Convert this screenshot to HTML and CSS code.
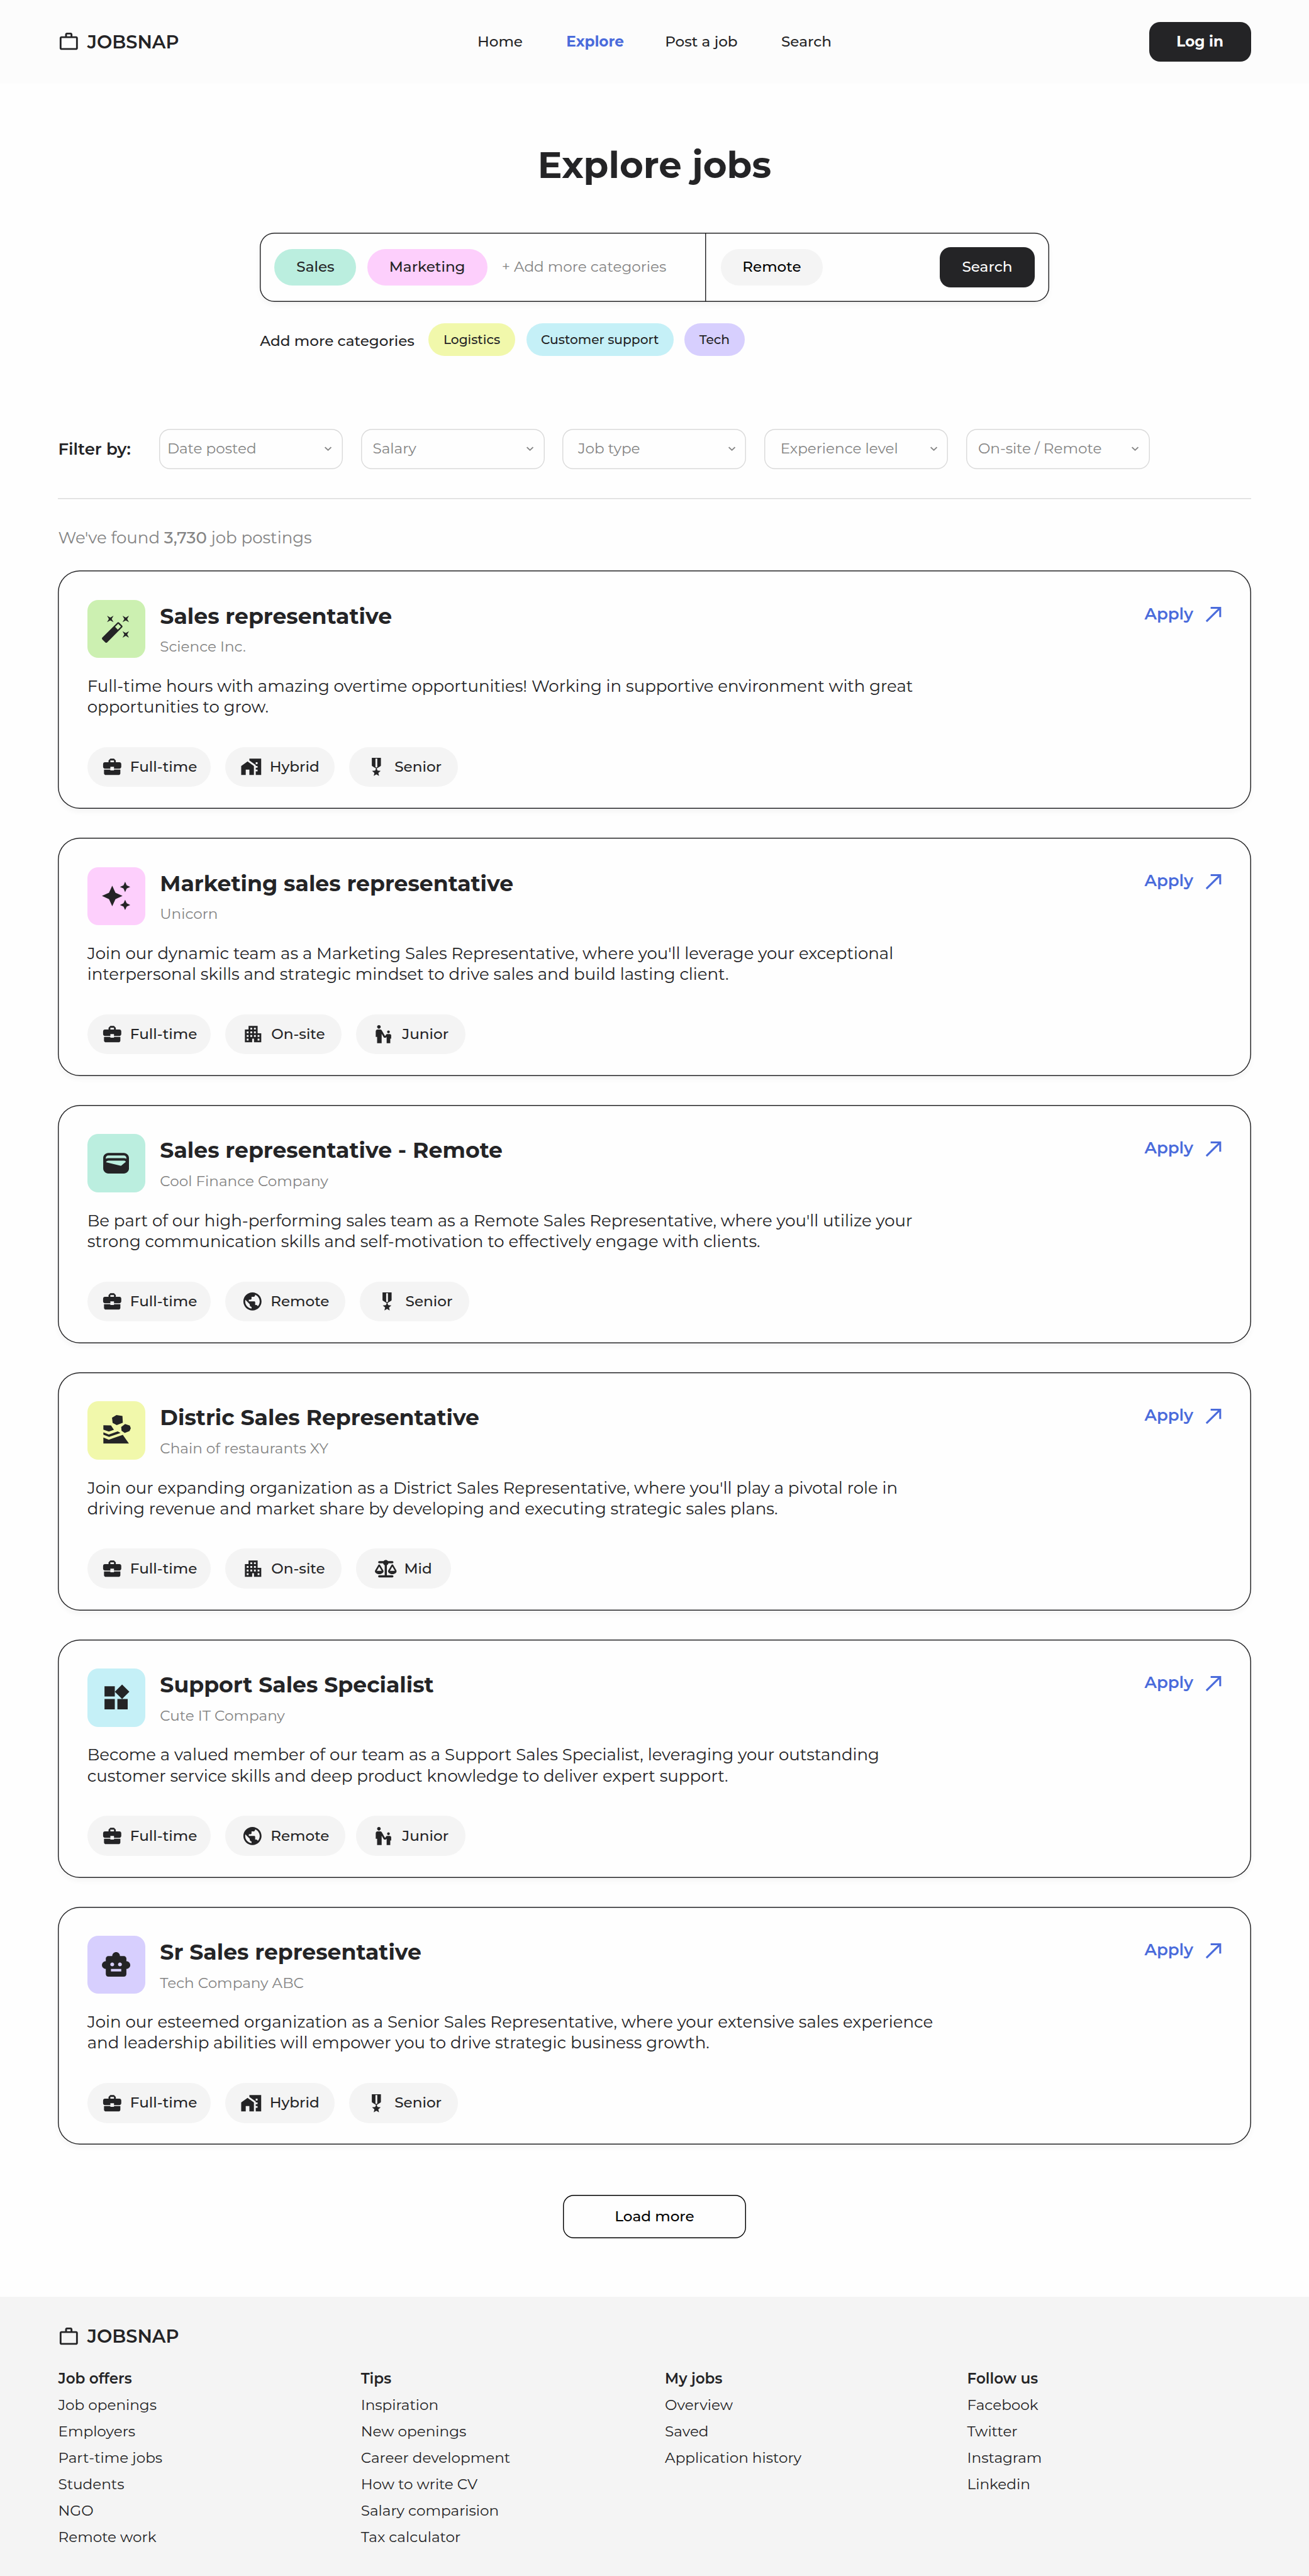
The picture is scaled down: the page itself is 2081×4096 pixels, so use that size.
FILE: index.html
```html
<!DOCTYPE html>
<html lang="en">
<head>
<meta charset="utf-8">
<title>Explore jobs - JOBSNAP</title>
<link rel="stylesheet" href="styles.css">
</head>
<body>
<svg class="sprite" aria-hidden="true">
  <symbol id="i-logo" viewBox="0 0 24 24"><path d="M14 6V4h-4v2h4zM4 8v11h16V8H4zm16-2c1.11 0 2 .89 2 2v11c0 1.11-.89 2-2 2H4c-1.11 0-2-.89-2-2l.01-11c0-1.11.88-2 1.99-2h4V4c0-1.11.89-2 2-2h4c1.11 0 2 .89 2 2v2h4z"/></symbol>
  <symbol id="i-chevron" viewBox="0 0 24 24"><path d="M6.2 10.2 7.6 8.9 12 13.1l4.4-4.2 1.4 1.3L12 15.6z"/></symbol>
  <symbol id="i-arrow" viewBox="0 0 18 18"><path d="M6 1.7h10.5v10.2M16.2 2 1.3 16.7" fill="none" stroke="currentColor" stroke-width="2.1"/></symbol>
  <symbol id="i-wand" viewBox="0 0 24 24"><path d="M7.5 5.6L10 7 8.6 4.5 10 2 7.5 3.4 5 2l1.4 2.5L5 7zm12 9.8L17 14l1.4 2.5L17 19l2.5-1.4L22 19l-1.4-2.5L22 14zM22 2l-2.5 1.4L17 2l1.4 2.5L17 7l2.5-1.4L22 7l-1.4-2.5zm-7.63 5.29c-.39-.39-1.02-.39-1.41 0L1.29 18.96c-.39.39-.39 1.02 0 1.41l2.34 2.34c.39.39 1.02.39 1.41 0L16.7 11.05c.39-.39.39-1.02 0-1.41l-2.33-2.35zm-1.03 5.49l-2.12-2.12 2.44-2.44 2.12 2.12-2.44 2.44z"/></symbol>
  <symbol id="i-sparkle" viewBox="0 0 24 24"><path d="M19 9l1.25-2.75L23 5l-2.75-1.25L19 1l-1.25 2.75L15 5l2.75 1.25L19 9zm-7.5.5L9 4 6.5 9.5 1 12l5.5 2.5L9 20l2.5-5.5L17 12l-5.5-2.5zM19 15l-1.25 2.75L15 19l2.75 1.25L19 23l1.25-2.75L23 19l-2.75-1.25L19 15z"/></symbol>
  <symbol id="i-wallet" viewBox="0 0 24 24"><path d="M18 4H6C3.79 4 2 5.79 2 8v8c0 2.21 1.79 4 4 4h12c2.21 0 4-1.79 4-4V8c0-2.21-1.79-4-4-4zm-1.86 9.77c-.24.2-.57.28-.88.2L4.15 11.25C4.45 10.52 5.16 10 6 10h12c.67 0 1.26.34 1.63.84l-3.49 2.93zM6 6h12c1.1 0 2 .9 2 2v.55c-.59-.34-1.27-.55-2-.55H6c-.73 0-1.41.21-2 .55V8c0-1.1.9-2 2-2z"/></symbol>
  <symbol id="i-rocks" viewBox="0 0 34 34"><path d="M17.4 0 24 1.1l.4 7.3-6.7 2.7-4.5-2.5-.7-5.6zM26.9 9.8l5.2 1.8 1.1 3-1.4 3.1-5.3 2.1-3.5-2.5-.4-4.1zM3 11.3l8.4.1 3.2 4.9L9 18.2l-6-2.1zM3 19.1l6 2.3 9.8-3.4 3.1 1.8L9.3 24.1 3 21.6zM3 24.8l6 2.3 15.4-5.3 6.7 9.6H3z"/></symbol>
  <symbol id="i-widgets" viewBox="0 0 24 24"><path d="M13 13v8h8v-8h-8zM3 21h8v-8H3v8zM3 3v8h8V3H3zm13.66-1.31L11 7.34 16.66 13l5.66-5.66-5.66-5.65z"/></symbol>
  <symbol id="i-robot" viewBox="0 0 24 24"><path d="M20 9V7c0-1.1-.9-2-2-2h-3c0-1.66-1.34-3-3-3S9 3.34 9 5H6c-1.1 0-2 .9-2 2v2c-1.66 0-3 1.34-3 3s1.34 3 3 3v4c0 1.1.9 2 2 2h12c1.1 0 2-.9 2-2v-4c1.66 0 3-1.34 3-3s-1.34-3-3-3zM7.5 11.5c0-.83.67-1.5 1.5-1.5s1.5.67 1.5 1.5S9.83 13 9 13s-1.5-.67-1.5-1.5zM16 17H8v-2h8v2zm-1-4c-.83 0-1.5-.67-1.5-1.5S14.17 10 15 10s1.5.67 1.5 1.5S15.83 13 15 13z"/></symbol>
  <symbol id="i-case" viewBox="0 0 24 24"><path d="M10 16v-1H3.01L3 19c0 1.11.89 2 2 2h14c1.11 0 2-.89 2-2v-4h-7v1h-4zm10-9h-4.01V5l-2-2h-4l-2 2v2H4c-1.1 0-2 .9-2 2v3c0 1.11.89 2 2 2h6v-2h4v2h6c1.1 0 2-.9 2-2V9c0-1.1-.9-2-2-2zm-6 0h-4V5h4v2z"/></symbol>
  <symbol id="i-hybrid" viewBox="0 0 24 24"><path d="M1 11v10h5v-6h4v6h5V11L8 6zM10 3v1.97l7 5V11h2v2h-2v2h2v2h-2v4h6V3H10zm9 6h-2V7h2v2z"/></symbol>
  <symbol id="i-medal" viewBox="0 0 24 24"><path d="M17 10.43V2H7v8.43c0 .35.18.68.49.86l4.18 2.51-.99 2.34-3.41.29 2.59 2.24L9.07 22 12 20.23 14.93 22l-.78-3.33 2.59-2.24-3.41-.29-.99-2.34 4.18-2.51c.3-.18.48-.5.48-.86zm-4 1.8l-1 .6-1-.6V3h2v9.23z"/></symbol>
  <symbol id="i-office" viewBox="0 0 24 24"><path d="M17 11V3H7v4H3v14h8v-4h2v4h8V11h-4zM7 19H5v-2h2v2zm0-4H5v-2h2v2zm0-4H5V9h2v2zm4 4H9v-2h2v2zm0-4H9V9h2v2zm0-4H9V5h2v2zm4 8h-2v-2h2v2zm0-4h-2V9h2v2zm0-4h-2V5h2v2zm4 12h-2v-2h2v2zm0-4h-2v-2h2v2z"/></symbol>
  <symbol id="i-junior" viewBox="0 0 24 24"><path d="M6.5 2c1.1 0 2 .9 2 2s-.9 2-2 2-2-.9-2-2 .9-2 2-2zm9 7.5c0 .83.67 1.5 1.5 1.5s1.5-.67 1.5-1.5S17.83 8 17 8s-1.5.67-1.5 1.5zm3 2.5h-2.84c-.58.01-1.14.32-1.45.86l-.92 1.32L9.72 8C9.35 7.37 8.69 7.01 8.01 7H5c-1.1 0-2 .9-2 2v6h1.5v7h5V11.61L12.03 16h2.2l.77-1.1V22h4v-5h1v-3.5c0-.82-.67-1.5-1.5-1.5z"/></symbol>
  <symbol id="i-globe" viewBox="0 0 24 24"><path d="M12 2C6.48 2 2 6.48 2 12s4.48 10 10 10 10-4.48 10-10S17.52 2 12 2zm-1 17.93c-3.95-.49-7-3.85-7-7.93 0-.62.08-1.21.21-1.79L9 15v1c0 1.1.9 2 2 2v1.93zm6.9-2.54c-.26-.81-1-1.39-1.9-1.39h-1v-3c0-.55-.45-1-1-1H8v-2h2c.55 0 1-.45 1-1V7h2c1.1 0 2-.9 2-2v-.41c2.93 1.19 5 4.06 5 7.41 0 2.08-.8 3.97-2.1 5.39z"/></symbol>
  <symbol id="i-scale" viewBox="0 0 640 512"><path d="M384 32H512c17.7 0 32 14.3 32 32s-14.3 32-32 32H398.4c-5.2 25.8-22.9 47.1-46.4 57.3V448H512c17.7 0 32 14.3 32 32s-14.3 32-32 32H320 128c-17.7 0-32-14.3-32-32s14.3-32 32-32H288V153.3c-23.5-10.3-41.2-31.6-46.4-57.3H128c-17.7 0-32-14.3-32-32s14.3-32 32-32H256c14.6-19.4 37.8-32 64-32s49.4 12.6 64 32zm55.6 288H584.4L512 195.8 439.6 320zM512 416c-62.9 0-115.2-34-126-78.9c-2.6-11 1-22.3 6.7-32.1l95.2-163.2c5-8.6 14.2-13.8 24.1-13.8s19.1 5.3 24.1 13.8l95.2 163.2c5.7 9.8 9.3 21.1 6.7 32.1C627.2 382 574.9 416 512 416zM126.8 195.8L54.4 320H199.3L126.8 195.8zM.9 337.1c-2.6-11 1-22.3 6.7-32.1l95.2-163.2c5-8.6 14.2-13.8 24.1-13.8s19.1 5.3 24.1 13.8l95.2 163.2c5.7 9.8 9.3 21.1 6.7 32.1C242 382 189.7 416 126.8 416S11.7 382 .9 337.1z"/></symbol>
</svg>

<header class="header">
  <a class="logo"><svg><use href="#i-logo"/></svg><span>JOBSNAP</span></a>
  <nav class="nav">
    <a>Home</a>
    <a class="active">Explore</a>
    <a>Post a job</a>
    <a>Search</a>
  </nav>
  <button class="btn login">Log in</button>
</header>

<main class="main">
  <h1 class="title">Explore jobs</h1>

  <section class="search">
    <div class="search-box">
      <div class="search-cats">
        <span class="chip mint sales">Sales</span>
        <span class="chip pink marketing">Marketing</span>
        <span class="placeholder">+ Add more categories</span>
      </div>
      <div class="search-place">
        <span class="chip grey remote">Remote</span>
        <button class="btn search-btn">Search</button>
      </div>
    </div>
    <div class="suggest">
      <span class="suggest-label">Add more categories</span>
      <span class="chip small lime logistics">Logistics</span>
      <span class="chip small sky support">Customer support</span>
      <span class="chip small violet tech">Tech</span>
    </div>
  </section>

  <section class="filters">
    <span class="filters-label">Filter by:</span>
    <div class="select date"><span>Date posted</span><svg><use href="#i-chevron"/></svg></div>
    <div class="select salary"><span>Salary</span><svg><use href="#i-chevron"/></svg></div>
    <div class="select type"><span>Job type</span><svg><use href="#i-chevron"/></svg></div>
    <div class="select level"><span>Experience level</span><svg><use href="#i-chevron"/></svg></div>
    <div class="select site"><span>On-site / Remote</span><svg><use href="#i-chevron"/></svg></div>
  </section>

  <p class="found">We've found <b>3,730</b> job postings</p>

  <section class="jobs">
    <article class="card">
      <div class="card-head">
        <div class="tile green"><svg><use href="#i-wand"/></svg></div>
        <div class="card-names"><h2>Sales representative</h2><p>Science Inc.</p></div>
        <a class="apply">Apply<svg><use href="#i-arrow"/></svg></a>
      </div>
      <p class="desc">Full-time hours with amazing overtime opportunities! Working in supportive environment with great<br>opportunities to grow.</p>
      <div class="tags">
        <span class="tag full"><svg><use href="#i-case"/></svg>Full-time</span>
        <span class="tag hybrid"><svg><use href="#i-hybrid"/></svg>Hybrid</span>
        <span class="tag senior"><svg><use href="#i-medal"/></svg>Senior</span>
      </div>
    </article>

    <article class="card">
      <div class="card-head">
        <div class="tile pink"><svg><use href="#i-sparkle"/></svg></div>
        <div class="card-names"><h2>Marketing sales representative</h2><p>Unicorn</p></div>
        <a class="apply">Apply<svg><use href="#i-arrow"/></svg></a>
      </div>
      <p class="desc">Join our dynamic team as a Marketing Sales Representative, where you'll leverage your exceptional<br>interpersonal skills and strategic mindset to drive sales and build lasting client.</p>
      <div class="tags">
        <span class="tag full"><svg><use href="#i-case"/></svg>Full-time</span>
        <span class="tag onsite"><svg><use href="#i-office"/></svg>On-site</span>
        <span class="tag junior"><svg><use href="#i-junior"/></svg>Junior</span>
      </div>
    </article>

    <article class="card">
      <div class="card-head">
        <div class="tile mint"><svg><use href="#i-wallet"/></svg></div>
        <div class="card-names"><h2>Sales representative - Remote</h2><p>Cool Finance Company</p></div>
        <a class="apply">Apply<svg><use href="#i-arrow"/></svg></a>
      </div>
      <p class="desc">Be part of our high-performing sales team as a Remote Sales Representative, where you'll utilize your<br>strong communication skills and self-motivation to effectively engage with clients.</p>
      <div class="tags">
        <span class="tag full"><svg><use href="#i-case"/></svg>Full-time</span>
        <span class="tag away"><svg><use href="#i-globe"/></svg>Remote</span>
        <span class="tag senior"><svg><use href="#i-medal"/></svg>Senior</span>
      </div>
    </article>

    <article class="card">
      <div class="card-head">
        <div class="tile lime"><svg><use href="#i-rocks"/></svg></div>
        <div class="card-names"><h2>Distric Sales Representative</h2><p>Chain of restaurants XY</p></div>
        <a class="apply">Apply<svg><use href="#i-arrow"/></svg></a>
      </div>
      <p class="desc">Join our expanding organization as a District Sales Representative, where you'll play a pivotal role in<br>driving revenue and market share by developing and executing strategic sales plans.</p>
      <div class="tags">
        <span class="tag full"><svg><use href="#i-case"/></svg>Full-time</span>
        <span class="tag onsite"><svg><use href="#i-office"/></svg>On-site</span>
        <span class="tag mid"><svg><use href="#i-scale"/></svg>Mid</span>
      </div>
    </article>

    <article class="card">
      <div class="card-head">
        <div class="tile sky"><svg><use href="#i-widgets"/></svg></div>
        <div class="card-names"><h2>Support Sales Specialist</h2><p>Cute IT Company</p></div>
        <a class="apply">Apply<svg><use href="#i-arrow"/></svg></a>
      </div>
      <p class="desc">Become a valued member of our team as a Support Sales Specialist, leveraging your outstanding<br>customer service skills and deep product knowledge to deliver expert support.</p>
      <div class="tags">
        <span class="tag full"><svg><use href="#i-case"/></svg>Full-time</span>
        <span class="tag away"><svg><use href="#i-globe"/></svg>Remote</span>
        <span class="tag junior tucked"><svg><use href="#i-junior"/></svg>Junior</span>
      </div>
    </article>

    <article class="card">
      <div class="card-head">
        <div class="tile violet"><svg><use href="#i-robot"/></svg></div>
        <div class="card-names"><h2>Sr Sales representative</h2><p>Tech Company ABC</p></div>
        <a class="apply">Apply<svg><use href="#i-arrow"/></svg></a>
      </div>
      <p class="desc">Join our esteemed organization as a Senior Sales Representative, where your extensive sales experience<br>and leadership abilities will empower you to drive strategic business growth.</p>
      <div class="tags">
        <span class="tag full"><svg><use href="#i-case"/></svg>Full-time</span>
        <span class="tag hybrid"><svg><use href="#i-hybrid"/></svg>Hybrid</span>
        <span class="tag senior"><svg><use href="#i-medal"/></svg>Senior</span>
      </div>
    </article>
  </section>

  <button class="load">Load more</button>
</main>

<footer class="footer">
  <a class="logo"><svg><use href="#i-logo"/></svg><span>JOBSNAP</span></a>
  <div class="footer-cols">
    <ul>
      <li class="head">Job offers</li><li>Job openings</li><li>Employers</li><li>Part-time jobs</li><li>Students</li><li>NGO</li><li>Remote work</li>
    </ul>
    <ul>
      <li class="head">Tips</li><li>Inspiration</li><li>New openings</li><li>Career development</li><li>How to write CV</li><li>Salary comparision</li><li>Tax calculator</li>
    </ul>
    <ul>
      <li class="head">My jobs</li><li>Overview</li><li>Saved</li><li>Application history</li>
    </ul>
    <ul>
      <li class="head">Follow us</li><li>Facebook</li><li>Twitter</li><li>Instagram</li><li>Linkedin</li>
    </ul>
  </div>
</footer>
</body>
</html>
```
FILE: styles.css
```css
/* 1rem = 10 units of the 1440-unit wide layout */
html { font-size: calc(100vw / 144); }

* { box-sizing: border-box; margin: 0; padding: 0; }

body {
  display: flex;
  flex-direction: column;
  height: 100vh;
  overflow: hidden;
  background: #fefefe;
  color: #242426;
  font-family: Montserrat, Inter, "Liberation Sans", sans-serif;
  font-size: 1.6rem;
  line-height: 2rem;
  white-space: nowrap;
}

svg { display: block; flex: none; fill: currentColor; }
.sprite { display: none; }
button { font: inherit; border: 0; }
ul { list-style: none; }

/* Palette */
.mint { background: #bbeedf; }
.pink { background: #fdcffc; }
.lime { background: #f1f8ab; }
.sky { background: #c5f0f7; }
.violet { background: #d7cffe; }
.green { background: #ccf0b1; }
.grey { background: #f4f4f4; color: #000; }

/* Header */
.header {
  display: flex;
  align-items: center;
  flex: none;
  height: 9.2rem;
  padding: 0 6.4rem;
  background: #fcfcfc;
}
.logo {
  display: flex;
  align-items: center;
  gap: .8rem;
  height: 2.4rem;
  font-size: 2rem;
  font-weight: 600;
}
.logo svg { width: 2.4rem; height: 2.4rem; }
.logo span { padding-top: .08rem; }
.header .logo { width: 46.12rem; }
.nav { display: flex; gap: 4.8rem; font-weight: 500; }
.nav .active { margin-right: -.28rem; color: #4a6bdb; font-weight: 700; }
.btn {
  display: flex;
  align-items: center;
  justify-content: center;
  height: 4.4rem;
  padding-bottom: .1rem;
  border-radius: 1.2rem;
  background: #242426;
  color: #fff;
}
.login { width: 11.2rem; margin-left: auto; padding-bottom: 0; font-weight: 700; }
.search-btn { width: 10.4rem; font-weight: 500; }

/* Hero and search */
.main { padding: 6.6rem 6.4rem 0; }
.title {
  font-size: 4rem;
  font-weight: 700;
  line-height: 4.8rem;
  text-align: center;
}
.search { width: 86.8rem; margin: 5rem auto 0; font-weight: 500; }
.search-box {
  display: flex;
  height: 7.6rem;
  border-radius: 1.6rem;
  box-shadow: inset 0 0 0 .1rem #242426, 0 .3rem .6rem rgba(0, 0, 0, .04);
}
.search-cats { display: flex; align-items: center; width: 49rem; padding-left: 1.6rem; gap: 1.2rem; }
.search-place {
  display: flex;
  flex: 1;
  align-items: center;
  justify-content: space-between;
  padding: 0 1.6rem 0 1.7rem;
  box-shadow: inset .1rem 0 0 #242426;
}
.chip {
  display: flex;
  align-items: center;
  justify-content: center;
  height: 4rem;
  padding-bottom: .1rem;
  border-radius: 2rem;
}
.sales { width: 9rem; }
.marketing { width: 13.2rem; }
.remote { width: 11.2rem; }
.placeholder { margin-left: .4rem; padding-bottom: .1rem; color: #848484; font-weight: 400; }
.suggest { display: flex; gap: 1.2rem; margin-top: 2.4rem; height: 3.6rem; align-items: center; }
.suggest-label { width: 17.3rem; padding-top: .3rem; }
.chip.small { height: 3.6rem; padding-bottom: 0; font-size: 1.4rem; }
.logistics { width: 9.6rem; }
.support { width: 16.2rem; }
.tech { width: 6.6rem; }

/* Filters */
.filters {
  display: flex;
  align-items: center;
  gap: 2rem;
  margin-top: 8rem;
  padding-bottom: 3.2rem;
  box-shadow: 0 .1rem 0 #dadada;
}
.filters-label { width: 9.1rem; padding-top: .08rem; font-size: 1.8rem; font-weight: 600; }
.select {
  display: flex;
  align-items: center;
  justify-content: space-between;
  width: 20.2rem;
  height: 4.4rem;
  padding: 0 .8rem 0 .9rem;
  border-radius: 1.2rem;
  box-shadow: inset 0 0 0 .1rem #dadada;
  color: #848484;
}
.select svg { width: 1.6rem; height: 1.6rem; }
.salary { padding-left: 1.3rem; }
.type { padding-left: 1.7rem; }
.level { padding-left: 1.76rem; }
.site { padding-left: 1.31rem; }

.found { margin-top: 3.34rem; font-size: 1.8rem; line-height: 2.2rem; color: #848484; }
.found b { font-weight: 500; }

/* Job cards */
.jobs { display: flex; flex-direction: column; gap: 3.2rem; margin-top: 2.46rem; }
.card {
  height: 26.2rem;
  padding: 3.2rem 3.2rem 0;
  border-radius: 2.4rem;
  box-shadow: inset 0 0 0 .1rem #242426, 0 .3rem .6rem rgba(0, 0, 0, .04);
}
.card-head { display: flex; height: 6.4rem; gap: 1.6rem; }
.tile {
  display: flex;
  align-items: center;
  justify-content: center;
  width: 6.4rem;
  height: 6.4rem;
  border-radius: 1.2rem;
}
.tile svg { width: 3.4rem; height: 3.4rem; }
.card-names { padding-top: .42rem; }
.card-names h2 { font-size: 2.4rem; font-weight: 700; line-height: 2.8rem; }
.card-names p { margin-top: .98rem; color: #848484; }
.apply {
  display: flex;
  align-items: center;
  justify-content: space-between;
  width: 8.5rem;
  height: 2rem;
  margin: .54rem 0 0 auto;
  color: #4a6bdb;
  font-size: 1.8rem;
  font-weight: 600;
}
.apply svg { width: 1.8rem; height: 1.8rem; margin-top: .18rem; }
.desc { margin-top: 1.99rem; font-size: 1.8rem; line-height: 2.3rem; }
.tags { display: flex; gap: 1.6rem; margin-top: 3.21rem; }
.tag {
  display: flex;
  align-items: center;
  justify-content: center;
  gap: .8rem;
  height: 4.4rem;
  border-radius: 2.2rem;
  background: #f4f4f4;
  font-weight: 500;
}
.tag svg { width: 2.4rem; height: 2.4rem; }
.full { width: 13.6rem; }
.hybrid, .senior, .junior { width: 12rem; }
.onsite { width: 12.8rem; }
.away { width: 13.2rem; }
.mid { width: 10.4rem; }
.tucked { margin-left: -.4rem; }

.load {
  display: block;
  width: 20.2rem;
  height: 4.8rem;
  margin: 5.5rem auto 0;
  border-radius: 1.2rem;
  background: none;
  box-shadow: inset 0 0 0 .1rem #000;
  color: #000;
  font-weight: 500;
}

/* Footer */
.footer { flex: 1; margin-top: 6.4rem; padding: 3.2rem 6.4rem 0; background: #f4f4f4; }
.footer-cols {
  display: grid;
  grid-template-columns: 33.3rem 33.45rem 33.25rem auto;
  margin-top: 2.05rem;
  line-height: 2.9rem;
}
.head { font-weight: 600; }
```
